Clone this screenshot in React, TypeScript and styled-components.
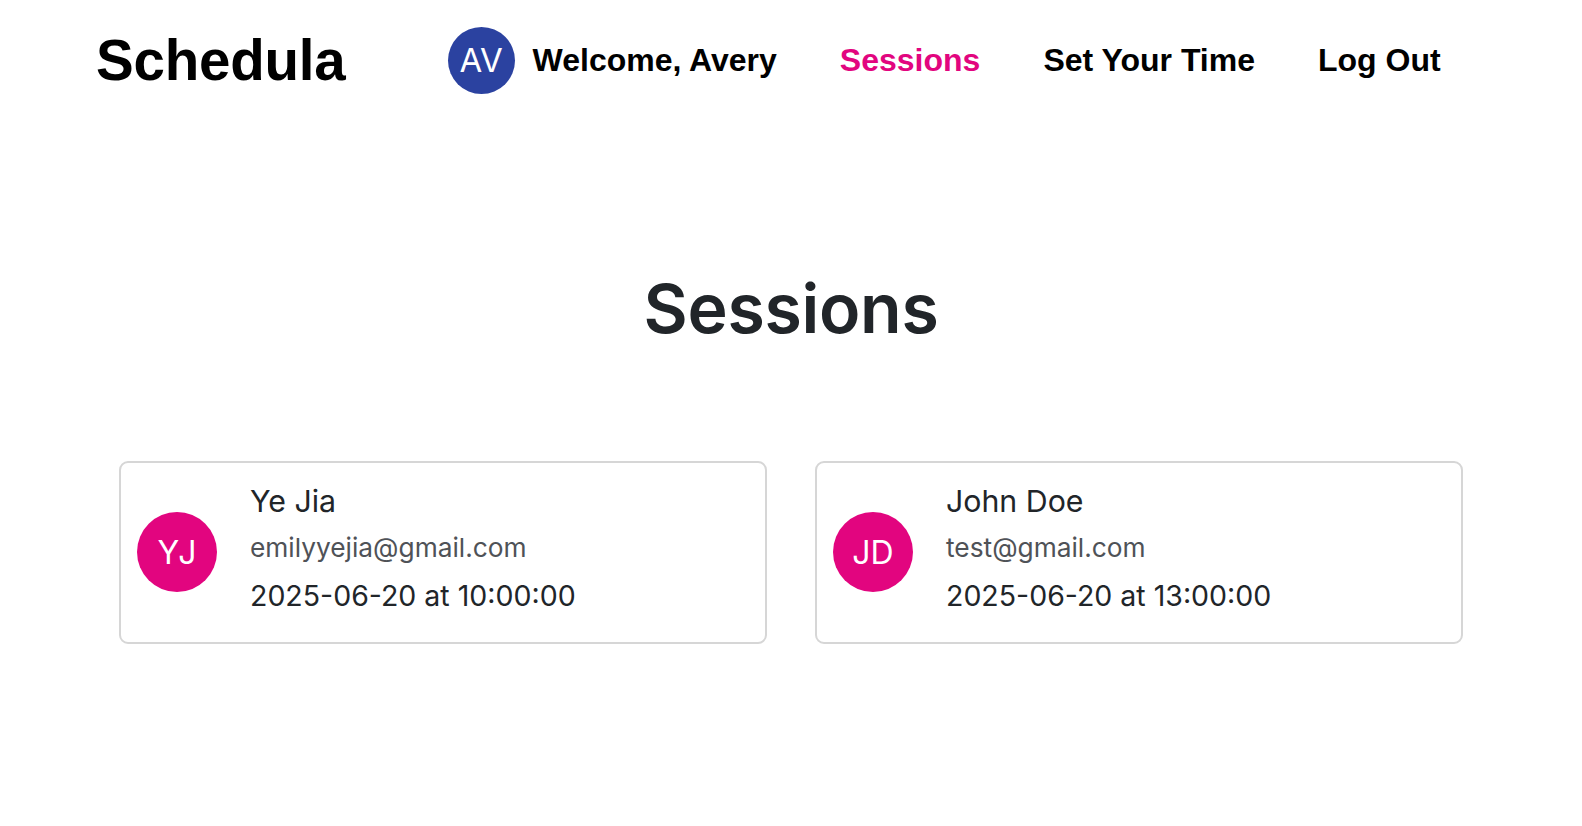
import React from "react";
import styled, { createGlobalStyle } from "styled-components";

const GlobalStyle = createGlobalStyle`
  * { box-sizing: border-box; }
  html, body { margin: 0; padding: 0; background: #ffffff; }
  body { font-family: Inter, "Noto Sans", sans-serif; color: #212529; }
`;

const PINK = "#e2057f";
const BLUE = "#2b42a0";

const Header = styled.header`
  display: flex;
  align-items: center;
  height: 118px;
  padding-left: 96px;
  padding-top: 2px;
  font-family: "Liberation Sans", Arial, sans-serif;
`;

const Logo = styled.div`
  font-size: 56.5px;
  font-weight: 700;
  color: #000;
  letter-spacing: -0.2px;
`;

const Nav = styled.nav`
  display: flex;
  align-items: center;
  gap: 63px;
  margin-left: 102px;
`;

const Welcome = styled.div`
  display: flex;
  align-items: center;
  gap: 18px;
`;

const Avatar = styled.div<{ $bg: string; $size: number; $font: number }>`
  width: ${(p) => p.$size}px;
  height: ${(p) => p.$size}px;
  border-radius: 50%;
  background: ${(p) => p.$bg};
  color: #fff;
  display: flex;
  align-items: center;
  justify-content: center;
  font-family: Inter, "Liberation Sans", sans-serif;
  font-size: ${(p) => p.$font}px;
  font-weight: 400;
  flex-shrink: 0;
`;

const NavText = styled.a<{ $active?: boolean }>`
  font-size: 32px;
  font-weight: 700;
  color: ${(p) => (p.$active ? PINK : "#000")};
  text-decoration: none;
  white-space: nowrap;
`;

const Main = styled.main`
  display: flex;
  flex-direction: column;
  align-items: center;
`;

const Title = styled.h1`
  margin: 150px 0 0;
  font-size: 68px;
  font-weight: 600;
  line-height: 1.2;
  color: #212529;
  letter-spacing: -0.3px;
`;

const Grid = styled.div`
  width: 1344px;
  margin-top: 111px;
  display: grid;
  grid-template-columns: 1fr 1fr;
  gap: 48px;
`;

const Card = styled.div`
  display: flex;
  align-items: center;
  gap: 33px;
  border: 2px solid #d6d6d6;
  border-radius: 9px;
  padding: 0 16px;
  min-height: 183px;
`;

const Info = styled.div`
  display: flex;
  flex-direction: column;
  padding-bottom: 8px;
`;

const Name = styled.div`
  font-size: 30.3px;
  line-height: 46px;
  color: #212529;
`;

const Email = styled.div`
  font-size: 26.3px;
  line-height: 48px;
  color: #4f5257;
`;

const When = styled.div`
  font-size: 28.5px;
  line-height: 47px;
  color: #212529;
`;

const sessions = [
  { initials: "YJ", name: "Ye Jia", email: "emilyyejia@gmail.com", when: "2025-06-20 at 10:00:00" },
  { initials: "JD", name: "John Doe", email: "test@gmail.com", when: "2025-06-20 at 13:00:00" },
];

export default function App() {
  return (
    <>
      <GlobalStyle />
      <Header>
        <Logo>Schedula</Logo>
        <Nav>
          <Welcome>
            <Avatar $bg={BLUE} $size={67} $font={33}>AV</Avatar>
            <NavText>Welcome, Avery</NavText>
          </Welcome>
          <NavText $active href="#">Sessions</NavText>
          <NavText href="#">Set Your Time</NavText>
          <NavText href="#">Log Out</NavText>
        </Nav>
      </Header>
      <Main>
        <Title>Sessions</Title>
        <Grid>
          {sessions.map((s) => (
            <Card key={s.email}>
              <Avatar $bg={PINK} $size={80} $font={32}>{s.initials}</Avatar>
              <Info>
                <Name>{s.name}</Name>
                <Email>{s.email}</Email>
                <When>{s.when}</When>
              </Info>
            </Card>
          ))}
        </Grid>
      </Main>
    </>
  );
}
